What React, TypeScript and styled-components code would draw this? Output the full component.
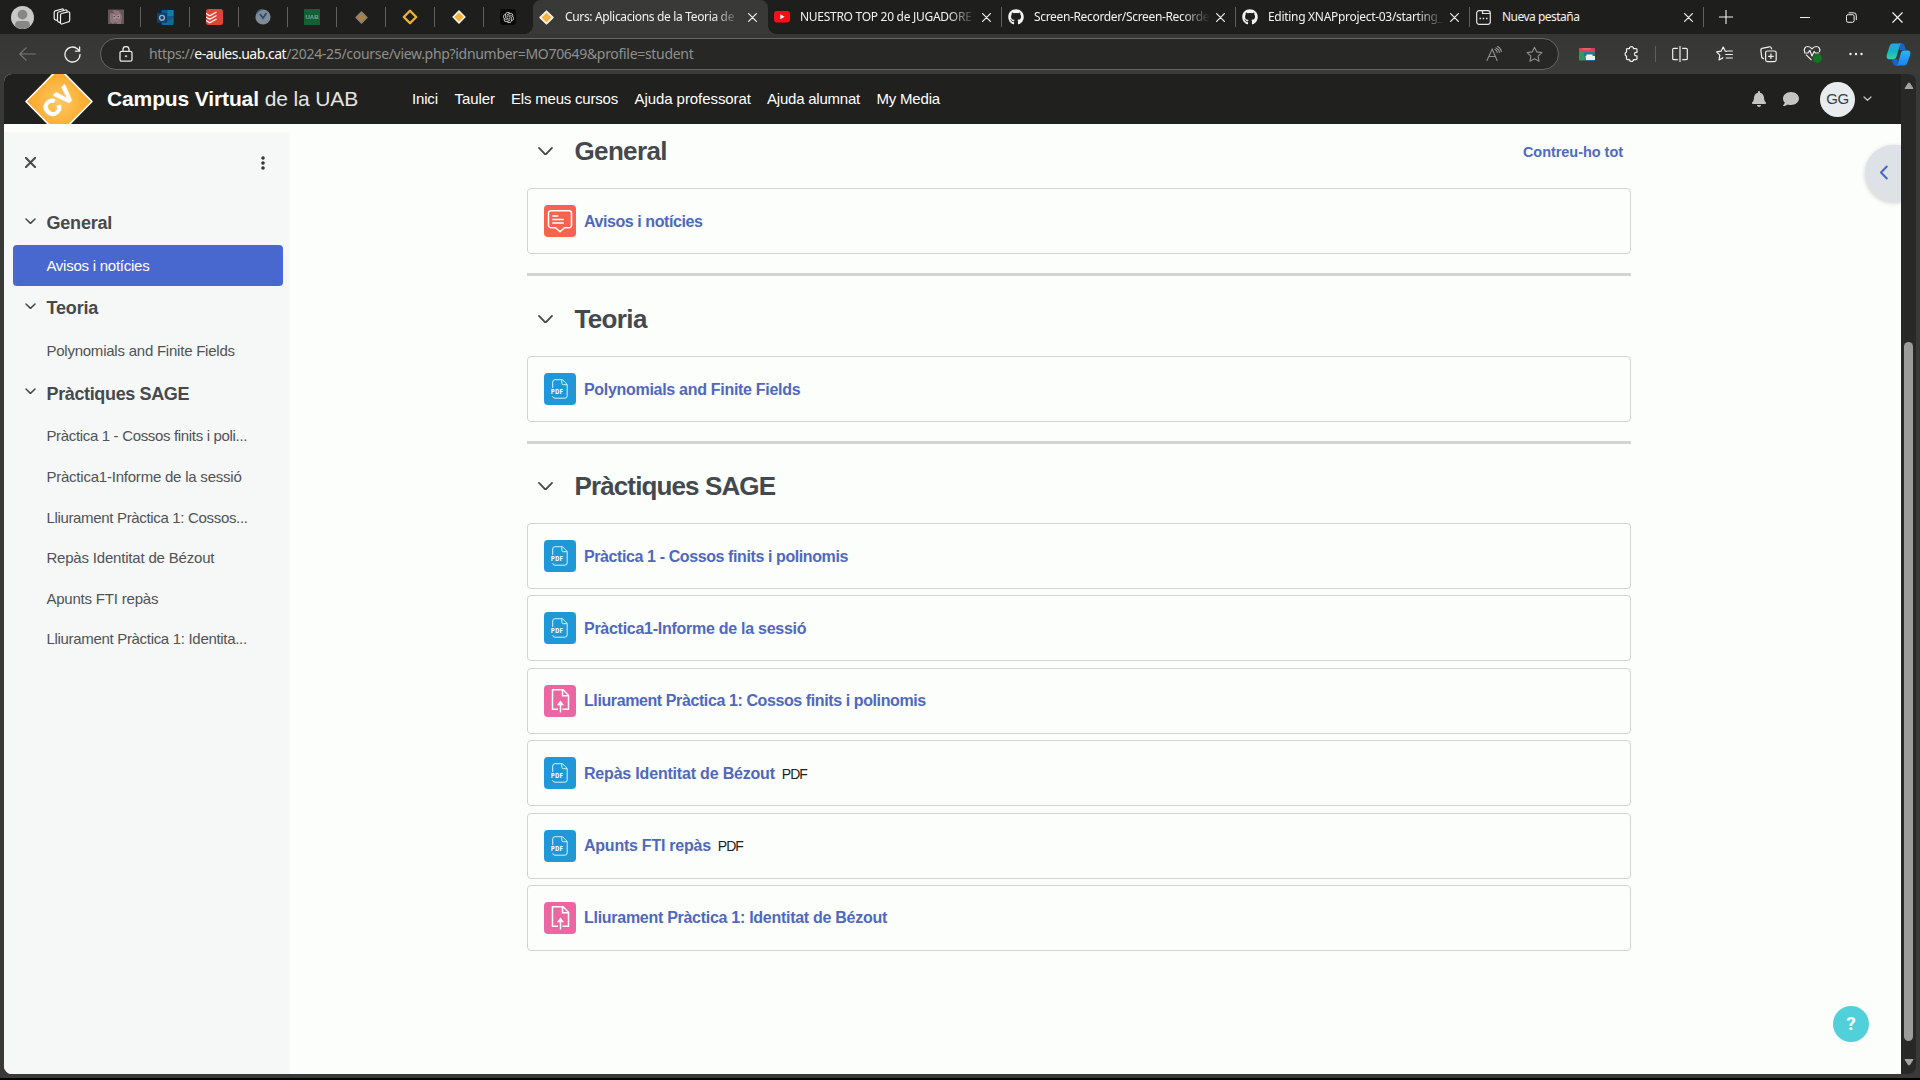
import React from 'react';
import styled, { createGlobalStyle, css } from 'styled-components';
import { FaBell, FaComment, FaGithub } from 'react-icons/fa';
import { RiOpenaiFill } from 'react-icons/ri';

const chromeFont = '"Noto Sans", "Open Sans", sans-serif';
const pageFont = '"Liberation Sans", Arial, sans-serif';

const GlobalStyle = createGlobalStyle`
  * { box-sizing: border-box; }
  html, body { margin: 0; background: #000; overflow: hidden; }
  svg { display: block; flex-shrink: 0; }
`;

const Window = styled.div`
  display: flex;
  flex-direction: column;
  width: 1920px;
  height: 1078px;
  background: #393a38;
  font-family: ${pageFont};
`;

/* ---------- tab strip ---------- */

const TabStrip = styled.div`
  display: flex;
  height: 34px;
  background: #1e1f1d;
  color: #f2f3f1;
  font: 12px ${chromeFont};
`;

const Slot = styled.div<{ $w: number }>`
  display: flex;
  flex: none;
  align-items: center;
  justify-content: center;
  width: ${p => p.$w}px;
  height: 100%;
`;

const PinnedTabs = styled.div`
  display: flex;
  margin-left: 12px;
`;

const PinnedTab = styled.div<{ $last?: boolean }>`
  display: flex;
  flex: none;
  align-items: center;
  justify-content: center;
  width: 49px;
  height: 34px;
  padding-right: 1px;
  background: ${p => (p.$last ? 'none' : 'linear-gradient(#60615f, #60615f) right center / 1px 20px no-repeat')};
`;

const Tab = styled.div<{ $active?: boolean; $divider?: boolean }>`
  position: relative;
  display: flex;
  flex: none;
  align-items: center;
  width: ${p => (p.$active ? 235 : 234)}px;
  height: 34px;
  padding: 0 8px 0 6px;
  ${p =>
    p.$divider &&
    css`
      background: linear-gradient(#60615f, #60615f) right center / 1px 20px no-repeat;
    `}
  ${p =>
    p.$active &&
    css`
      background: #393a38;
      border-radius: 8px 8px 0 0;
      &::before,
      &::after {
        content: '';
        position: absolute;
        bottom: 0;
        width: 8px;
        height: 8px;
      }
      &::before {
        left: -8px;
        background: radial-gradient(circle at 0 0, transparent 7.5px, #393a38 8px);
      }
      &::after {
        right: -8px;
        background: radial-gradient(circle at 100% 0, transparent 7.5px, #393a38 8px);
      }
    `}
`;

const TabTitle = styled.span<{ $track: number; $fade?: boolean; $gap?: number }>`
  flex: none;
  width: 176px;
  margin-left: ${p => p.$gap ?? 10}px;
  white-space: nowrap;
  line-height: 20px;
  letter-spacing: ${p => p.$track}px;
  ${p =>
    p.$fade &&
    css`
      mask-image: linear-gradient(90deg, #000 148px, transparent 176px);
    `}
`;

const TabClose = styled.span`
  display: flex;
  margin-left: auto;
  padding-right: 3px;
`;

const WindowButtons = styled.div`
  display: flex;
  margin-left: auto;
`;

/* ---------- toolbar ---------- */

const Toolbar = styled.div`
  display: flex;
  align-items: center;
  height: 40px;
  background: linear-gradient(#363735, #3b3c3a);
`;

const AddressBar = styled.div`
  display: flex;
  align-items: center;
  width: 1459px;
  height: 32px;
  margin-left: 10px;
  padding: 0 15px 0 18px;
  border: 1px solid #666765;
  border-radius: 16px;
  background: #272826;
  color: #8f908e;
  font: 14px ${chromeFont};
`;

const UrlPart = styled.span<{ $track: number; $host?: boolean }>`
  letter-spacing: ${p => p.$track}px;
  white-space: nowrap;
  color: ${p => (p.$host ? '#fbfcfa' : 'inherit')};
`;

const Url = styled.div`
  margin: 0 auto 1px 16px;
`;

const ToolActions = styled.div`
  display: flex;
  align-items: center;
  height: 40px;
  margin-left: 6px;
`;

const ToolDivider = styled.div`
  width: 1px;
  height: 16px;
  margin: 0 2px 0 2px;
  background: #5e5f5d;
`;

/* ---------- page ---------- */

const Viewport = styled.div`
  display: flex;
  height: 1000px;
  margin: 0 4px;
  border-radius: 8px;
  background: #282927;
  overflow: hidden;
`;

const Page = styled.div`
  position: relative;
  width: 1897px;
  background: #fcfefb;
`;

const NavBar = styled.header`
  display: flex;
  align-items: center;
  height: 50px;
  padding-left: 19px;
  background: #20211f;
  color: #fff;
`;

const Brand = styled.div`
  display: flex;
  align-items: baseline;
  width: 305px;
  margin-left: 13px;
  padding-bottom: 1px;
  font-size: 21px;
  line-height: 30px;
`;

const BrandWord = styled.span<{ $bold?: boolean; $track: number }>`
  font-weight: ${p => (p.$bold ? 700 : 400)};
  color: ${p => (p.$bold ? '#fff' : '#e4e5e3')};
  letter-spacing: ${p => p.$track}px;
  white-space: nowrap;
  & + & {
    margin-left: 6px;
  }
`;

const NavLinks = styled.nav`
  display: flex;
  padding-bottom: 2px;
`;

const NavLink = styled.a<{ $w: number; $track: number }>`
  flex: none;
  width: ${p => p.$w}px;
  font-size: 15px;
  letter-spacing: ${p => p.$track}px;
  white-space: nowrap;
`;

const UserTools = styled.div`
  display: flex;
  align-items: center;
  margin-left: auto;
  padding-right: 29px;
  color: #c4c5c3;
`;

const Initials = styled.div`
  display: flex;
  align-items: center;
  justify-content: center;
  width: 35px;
  height: 35px;
  margin: 0 8px 0 13px;
  padding-bottom: 2px;
  border-radius: 50%;
  background: #e9ecef;
  color: #383c3f;
  font-size: 15px;
  letter-spacing: -0.4px;
`;

const Body = styled.div`
  display: flex;
  height: 950px;
`;

/* ---------- course index ---------- */

const Drawer = styled.aside`
  width: 285px;
  margin-top: 9px;
  padding: 0 6px 0 9px;
  background: #f6f7f7;
  color: #474a4d;
  box-shadow: 0 0 3px #f6f7f7;
`;

const DrawerTop = styled.div`
  display: flex;
  align-items: center;
  justify-content: space-between;
  height: 61.4px;
  margin-bottom: 6px;
  padding: 0 18px 2px 12px;
`;

const IndexHeading = styled.div<{ $track: number }>`
  display: flex;
  align-items: center;
  gap: 10.5px;
  height: 44.6px;
  padding: 2px 0 0 12px;
  font-size: 18px;
  font-weight: 700;
  letter-spacing: ${p => p.$track}px;
  svg {
    margin-top: -6px;
  }
`;

const IndexItem = styled.div<{ $track: number; $selected?: boolean }>`
  height: 40.6px;
  padding-left: 33.4px;
  border-radius: 4px;
  font-size: 15px;
  line-height: 41.4px;
  letter-spacing: ${p => p.$track}px;
  white-space: nowrap;
  color: ${p => (p.$selected ? '#fff' : '#505356')};
  background: ${p => (p.$selected ? '#4868d0' : 'transparent')};
`;

/* ---------- course content ---------- */

const Content = styled.main`
  width: 1104px;
  margin-left: 238px;
`;

const Section = styled.section<{ $gap: number }>`
  padding: ${p => p.$gap}px 0 19px;
  & + & {
    border-top: 3px solid #d3d5d3;
  }
`;

const SectionHead = styled.div`
  display: flex;
  align-items: center;
  height: 54px;
  margin-bottom: 10px;
  padding: 0 8px 0 10.5px;
  color: #43494e;
`;

const SectionTitle = styled.h3<{ $track: number }>`
  margin: 0 auto 0 22px;
  font-size: 26px;
  font-weight: 700;
  letter-spacing: ${p => p.$track}px;
`;

const CollapseAll = styled.a`
  padding-top: 1px;
  color: #4f69c0;
  font-size: 14.5px;
  font-weight: 700;
  letter-spacing: -0.04px;
`;

const CardList = styled.div`
  display: flex;
  flex-direction: column;
  gap: 6.4px;
`;

const Card = styled.div`
  display: flex;
  align-items: center;
  height: 66px;
  padding-left: 16px;
  border: 1px solid #d1d4d2;
  border-radius: 4px;
`;

const CardLink = styled.a<{ $track: number }>`
  margin-left: 8px;
  padding-top: 1px;
  color: #4f68bf;
  font-size: 16px;
  font-weight: 700;
  letter-spacing: ${p => p.$track}px;
  white-space: nowrap;
`;

const FileType = styled.span`
  margin: 1px 0 0 7px;
  color: #1d2125;
  font-size: 14px;
  letter-spacing: -1px;
`;

/* ---------- floating controls ---------- */

const DrawerToggle = styled.button`
  position: absolute;
  top: 71px;
  right: 0;
  display: flex;
  align-items: center;
  width: 36px;
  height: 57px;
  padding: 0 0 3px 14px;
  border: 0;
  border-radius: 29px 0 0 29px;
  background: #dee2e6;
  box-shadow: 0 1px 4px rgba(0, 0, 0, 0.18);
`;

const HelpButton = styled.button`
  position: absolute;
  right: 32px;
  bottom: 32px;
  width: 36px;
  height: 36px;
  padding: 0;
  border: 0;
  border-radius: 50%;
  background: #52d0da;
  color: #fff;
  font: 700 19px/36px Roboto, ${pageFont};
`;

const Scrollbar = styled.div`
  display: flex;
  flex-direction: column;
  align-items: center;
  width: 15px;
  padding: 8px 0;
`;

const Thumb = styled.div`
  width: 9px;
  height: 699px;
  margin: auto 0 17px;
  border-radius: 5px;
  background: #9c9d9b;
`;

/* ---------- icons ---------- */

const Chevron = ({ w, stroke = 1.8, color = 'currentColor' }: { w: number; stroke?: number; color?: string }) => (
  <svg width={w} height={w * 0.58} viewBox={`0 0 ${w} ${w * 0.58}`} fill="none" stroke={color} strokeWidth={stroke} strokeLinecap="round" strokeLinejoin="round">
    <path d={`M1 1L${w / 2} ${w * 0.58 - 1}L${w - 1} 1`} />
  </svg>
);

const Cross = ({ s, stroke = 1.2 }: { s: number; stroke?: number }) => (
  <svg width={s} height={s} viewBox="0 0 10 10" stroke="currentColor" strokeWidth={(stroke * 10) / s} strokeLinecap="round">
    <path d="M.7 .7L9.3 9.3M9.3 .7L.7 9.3" />
  </svg>
);

const Avatar = () => (
  <svg width="23" height="23" viewBox="0 0 23 23">
    <circle cx="11.5" cy="11.5" r="11.5" fill="#c9cac8" />
    <circle cx="11.5" cy="8.6" r="4.9" fill="#878886" />
    <path d="M4.2 20.4c-.7-4.2 1.5-5.4 3.3-5.4h8c1.8 0 4 1.2 3.3 5.4A11.5 11.5 0 0 1 4.2 20.4z" fill="#878886" />
  </svg>
);

const Workspaces = () => (
  <svg width="18" height="18" viewBox="0 0 18 18" fill="none" stroke="#f0f1ef" strokeWidth="1.2" strokeLinejoin="round">
    <path d="M7.5 6.9a1.500 1.500 0 0 1 1.100-1.400l6.400-1.700a1.300 1.300 0 0 1 1.700 1.300v7.200a1.500 1.500 0 0 1-1.200 1.500l-6.400 2.200a1.200 1.200 0 0 1-1.600-1.100z" />
    <path d="M7.4 14.600l-1.600-.5a1.700 1.700 0 0 1-1.300-1.600V5.400a1.500 1.500 0 0 1 1.100-1.400l7-2a1.300 1.300 0 0 1 1.600 1.200v.6" />
    <path d="M4.400 12.500l-2-.6a1.600 1.600 0 0 1-1.200-1.600V4.200a1.500 1.500 0 0 1 1.100-1.400L9 1a1.200 1.200 0 0 1 1.500.9v.5" />
  </svg>
);

const AnimeFavicon = () => (
  <svg width="16" height="16" viewBox="0 0 16 16">
    <rect y=".5" width="16" height="14.5" fill="#65575b" />
    <path d="M2 13V5l4-4 5 1 3 5-1 8H9l-1-2-3 2z" fill="#8a747a" />
    <path d="M5 5l3 2 4-2v4L8 12 5 9z" fill="#a68f92" />
    <path d="M5.5 7.5h1.500M9.500 7.500H11M3 3l3 1M7.500 10h2" stroke="#54454b" />
  </svg>
);

const OutlookFavicon = () => (
  <svg width="17" height="17" viewBox="0 0 17 17">
    <rect x="4.5" y="1" width="12" height="13" rx="1" fill="#145a87" />
    <path d="M10.5 1h6v6h-6z" fill="#177b9b" />
    <path d="M4.5 9l6 3.500 6-3.500v6a1 1 0 0 1-1 1h-10a1 1 0 0 1-1-1z" fill="#146b91" />
    <rect x="0" y="3.8" width="10" height="10" rx="1" fill="#0b4274" />
    <circle cx="5" cy="8.8" r="2.4" fill="none" stroke="#9fb0bf" strokeWidth="1.4" />
  </svg>
);

const TodoistFavicon = () => (
  <svg width="17" height="16" viewBox="0 0 17 16">
    <rect width="17" height="16" rx="2.5" fill="#e14437" />
    <path d="M0 4.500l3.800 2.200L10.500 3M0 8l3.800 2.200 6.700-3.700M0 11.500l3.800 2.200 6.700-3.700" fill="none" stroke="#fff" strokeWidth="1.3" />
  </svg>
);

const ClockFavicon = () => (
  <svg width="16" height="16" viewBox="0 0 16 16">
    <circle cx="8" cy="8" r="7.6" fill="#7f8b97" />
    <path d="M1.500 5a7 7 0 0 1 6-4.500" stroke="#3a5e83" strokeWidth="1.3" fill="none" />
    <path d="M5 5l3 4 3.500-5" stroke="#28496e" strokeWidth="1.7" fill="none" />
  </svg>
);

const UabFavicon = styled.span`
  width: 16px;
  height: 16px;
  background: #155f35;
  color: #7da58c;
  font: 700 6px/16px ${pageFont};
  text-align: center;
`;

const DiamondFavicon = ({ fill, edge, s = 14 }: { fill: string; edge: string; s?: number }) => (
  <svg width={s} height={s} viewBox="0 0 14 14">
    <path d="M7 1.2L12.8 7 7 12.8 1.2 7z" fill={fill} stroke={edge} strokeWidth="1.7" strokeLinejoin="round" />
  </svg>
);

const RingFavicon = () => (
  <svg width="16" height="16" viewBox="0 0 16 16">
    <path d="M8 1.800L14.200 8 8 14.200 1.800 8z" fill="none" stroke="#f3b333" strokeWidth="2.3" strokeLinejoin="round" />
  </svg>
);

const ChatFavicon = styled.span`
  display: flex;
  align-items: center;
  justify-content: center;
  width: 16px;
  height: 16px;
  border-radius: 3px;
  background: #0a0b09;
  color: #dcdddb;
  font-size: 13px;
`;

const YoutubeFavicon = () => (
  <svg width="16" height="12" viewBox="0 0 16 12">
    <rect width="16" height="11.5" rx="3" fill="#fb0d18" />
    <path d="M6.300 3.300v5l4.300-2.500z" fill="#fff" />
  </svg>
);

const NewTabFavicon = () => (
  <svg width="15" height="15" viewBox="0 0 15 15" fill="none" stroke="#e6e7e5" strokeWidth="1.2">
    <rect x=".7" y=".7" width="13.6" height="13.6" rx="2.5" />
    <path d="M6.500 .8v2.700h7.600" />
    <path d="M3.500 8.500h1.500M6.700 8.500h1.500M10 8.500h1.500" strokeWidth="1.5" />
  </svg>
);

const Plus = () => (
  <svg width="14" height="14" viewBox="0 0 14 14" stroke="#f2f3f1" strokeWidth="1.1"><path d="M7 0v14M0 7h14" /></svg>
);
const Minimize = () => (
  <svg width="10" height="10" viewBox="0 0 10 10" stroke="#f2f3f1"><path d="M0 5.500h10" /></svg>
);
const Restore = () => (
  <svg width="11" height="11" viewBox="0 0 11 11" fill="none" stroke="#f2f3f1">
    <rect x=".5" y="2.7" width="7.6" height="7.6" rx="1.6" />
    <path d="M2.600 .8h4.900a2.700 2.700 0 0 1 2.800 2.800v4.500" />
  </svg>
);

const Back = () => (
  <svg width="17" height="14" viewBox="0 0 17 14" fill="none" stroke="#787977" strokeWidth="1.2" strokeLinecap="round"><path d="M16.300 7H.8M7 .8L.8 7 7 13.200" /></svg>
);
const Reload = () => (
  <svg width="17" height="17" viewBox="0 0 17 17" fill="none" stroke="#eff0ee" strokeWidth="1.3" strokeLinecap="round"><path d="M16 8.500A7.500 7.500 0 1 1 13.600 3l1.900 1.900M15.600 .9v4.200h-4.200" /></svg>
);
const Lock = () => (
  <svg width="14" height="16" viewBox="0 0 14 16" fill="none" stroke="#e6e7e5" strokeWidth="1.3"><rect x="1" y="5.3" width="12" height="9.9" rx="1.6" /><path d="M4 5.300V3.600a3 3 0 0 1 6 0v1.700" /><circle cx="7" cy="10.2" r=".8" fill="#e6e7e5" strokeWidth=".6" /></svg>
);
const ReadAloud = () => (
  <svg width="16" height="16" viewBox="0 0 16 16" fill="none" stroke="#8f908e" strokeWidth="1.1" strokeLinecap="round"><path d="M1 14.500L6.200 3l4.900 11.500M2.800 10.500h6.700M9 3.600q2 .9 2.300 3M9.900 1.900q3 1.100 3.600 4.500M11.400 .6q3.200 1.300 4 5" /></svg>
);
const starPath = 'M8.5 1.2l2.25 4.7 5.15.7-3.75 3.6.9 5.1-4.55-2.45-4.55 2.45.9-5.1L1.1 6.6l5.15-.7z';
const Star = () => (
  <svg width="17" height="17" viewBox="0 0 17 17" fill="none" stroke="#8f908e" strokeWidth="1.1" strokeLinejoin="round"><path d={starPath} /></svg>
);
const Gallery = () => (
  <svg width="16" height="13" viewBox="0 0 16 13"><rect width="16" height="12.5" rx="1" fill="#35965a" /><path d="M0 1a1 1 0 0 1 1-1h14a1 1 0 0 1 1 1v3H0z" fill="#df3f55" /><path d="M3.500 0h8v2h-8z" fill="#e95b70" /><path d="M5 4.500h11v7a1 1 0 0 1-1 1H6z" fill="#2c69b8" /><path d="M6.500 8h9.500v4H7z" fill="#f1f0df" /><path d="M7.500 6.500h6V8h-6z" fill="#fff" /></svg>
);
const Puzzle = () => (
  <svg width="16" height="16" viewBox="0 0 16 16" fill="none" stroke="#eff0ee" strokeWidth="1.2" strokeLinejoin="round"><path d="M4.700 2.600h1.700a2 2 0 0 1 4 0H13a1 1 0 0 1 1 1v2.700h-.8a1.800 1.800 0 0 0 0 3.600h.8v2.700a1 1 0 0 1-1 1h-2.500a2 2 0 0 1-4 0H4.500a1 1 0 0 1-1-1v-2.500a2.100 2.100 0 0 1 0-4V3.600a1 1 0 0 1 1.200-1z" /></svg>
);
const Split = () => (
  <svg width="16" height="16" viewBox="0 0 16 16" fill="none" stroke="#eff0ee" strokeWidth="1.2"><path d="M8 0v16M5.800 2.300H2a1.300 1.300 0 0 0-1.300 1.300v8.800A1.300 1.300 0 0 0 2 13.700h3.800M10.200 2.300H14a1.300 1.300 0 0 1 1.300 1.300v8.800a1.300 1.300 0 0 1-1.300 1.300h-3.800" /></svg>
);
const Favorites = () => (
  <svg width="17" height="16" viewBox="0 0 17 16" fill="none" stroke="#eff0ee" strokeWidth="1.2" strokeLinecap="round" strokeLinejoin="round"><path d="M10.500 5.300l-1.300-.2L7.200 1 5.100 5.200l-4.500.7 3.200 3.200-.8 4.900 3.800-2.100M11.500 5h4.900M9.800 8.500h6.600M10.200 12h6.200" /></svg>
);
const Collections = () => (
  <svg width="17" height="17" viewBox="0 0 17 17" fill="none" stroke="#eff0ee" strokeWidth="1.2" strokeLinejoin="round"><rect x="5.6" y="5" width="10.6" height="10.6" rx="1.8" /><path d="M10.900 7.500v5.600M8.100 10.300h5.600M4 12.600l-1.100-.3a1.500 1.500 0 0 1-1.100-1L.8 4.200A1.800 1.800 0 0 1 2.100 2.300L9.300.8a1.800 1.800 0 0 1 2.100 1.300l.2 1.200" /></svg>
);
const Health = () => (
  <svg width="20" height="18" viewBox="0 0 20 18" fill="none"><path d="M1.800 7.200C.3 3.900 2.200 1.500 4.800 1.500c2 0 3.200 1 4.200 2.300 1-1.300 2.200-2.300 4.200-2.300 2.700 0 4.500 2.600 3.200 5.500M3 9.700l5.500 5.500M1 8h4l1.800-2.700L9 11l2.200-4.500L12.300 8h4" stroke="#eff0ee" strokeWidth="1.2" strokeLinejoin="round" /><circle cx="14.3" cy="13.2" r="4.5" fill="#147422" /></svg>
);
const Dots = () => (
  <svg width="14" height="4" viewBox="0 0 14 4" fill="#eff0ee"><circle cx="1.5" cy="2" r="1.2" /><circle cx="7" cy="2" r="1.2" /><circle cx="12.5" cy="2" r="1.2" /></svg>
);
const Copilot = () => (
  <svg width="25" height="23" viewBox="0 0 25 23">
    <defs>
      <linearGradient id="cpA" x1="0" y1="0" x2="0" y2="1"><stop offset="0" stopColor="#25a6e6" /><stop offset=".5" stopColor="#16b3c4" /><stop offset="1" stopColor="#35d39a" /></linearGradient>
      <linearGradient id="cpB" x1="0" y1="0" x2="0" y2="1"><stop offset="0" stopColor="#2bb5f5" /><stop offset="1" stopColor="#1b82f0" /></linearGradient>
    </defs>
    <path d="M13 .5h3a2.500 2.500 0 0 1 2.400 1.800l1.600 5h-6z" fill="#1866c4" />
    <path d="M12 22.500H9.500a2.500 2.500 0 0 1-2.400-1.800L5.500 16h6z" fill="#1762cf" />
    <path d="M6.800.5h9.400c-1.500 0-2.200 1.300-2.700 3l-3 10.200c-.5 1.600-1.400 2.500-3.200 2.500H3.500C1 16.200.1 14 .9 11.400L3.500 3.500C4.200 1.500 5 .5 6.800.5z" fill="url(#cpA)" />
    <path d="M18.200 22.500H9.500c1.500 0 2.200-1.300 2.700-3l2.700-9.400c.5-1.700 1.400-2.700 3.200-2.700h3.400c2.500 0 3.500 2 2.700 4.700l-2.700 7.400c-.7 2-1.500 3-3.300 3z" fill="url(#cpB)" />
  </svg>
);

const CvLogo = () => (
  <svg width="71" height="50" viewBox="0 0 71 50">
    <defs>
      <radialGradient id="cv" cx=".5" cy=".5" r=".5"><stop offset="0" stopColor="#ffc866" /><stop offset=".65" stopColor="#fbb23a" /><stop offset="1" stopColor="#f9a62c" /></radialGradient>
    </defs>
    <path d="M36-6L69 27.500 36 61 3 27.500z" fill="url(#cv)" stroke="#fff" strokeWidth="1.6" strokeLinejoin="round" />
    <text x="35.5" y="35.5" textAnchor="middle" transform="rotate(-44 35.5 27)" fontFamily={pageFont} fontWeight="700" fontSize="23" letterSpacing="1.5" fill="#fff" stroke="#fff" strokeWidth="1.1" strokeLinejoin="round">CV</text>
  </svg>
);

const IconTile = ({ color, children }: { color: string; children: React.ReactNode }) => (
  <svg width="32" height="32" viewBox="0 0 32 32"><rect width="32" height="32" rx="4" fill={color} />{children}</svg>
);
const ForumIcon = () => (
  <IconTile color="#f7634d"><g fill="none" stroke="#fff" strokeWidth="1.5" strokeLinejoin="round"><path d="M7 5.700h18a2.500 2.500 0 0 1 2.500 2.500v12a2.500 2.500 0 0 1-2.500 2.500h-4.500L16 26.800l-4.500-4.100H7a2.500 2.500 0 0 1-2.500-2.500v-12A2.500 2.500 0 0 1 7 5.700z" /><path d="M8.300 11h6M8.300 14.500h11.500M8.300 18h11.500" strokeWidth="1.7" /></g></IconTile>
);
const PdfIcon = () => (
  <IconTile color="#1f98d8"><g fill="none" stroke="#d9f0fb" strokeWidth="1"><path d="M8.700 15V9a2.300 2.300 0 0 1 2.300-2.300h7.500l4.700 4.800v11.400a2.300 2.300 0 0 1-2.300 2.300H11a2.300 2.300 0 0 1-2.300-2" /><path d="M17.800 6.700v3.500a1.500 1.500 0 0 0 1.500 1.500h3.700" /></g><text x="7" y="21" fontFamily="Inter, sans-serif" fontWeight="800" fontSize="5.5" textLength="12" fill="#fff">PDF</text></IconTile>
);
const UploadIcon = () => (
  <IconTile color="#eb66a2"><g fill="none" stroke="#fff" strokeWidth="1.5"><path d="M14 24.200H8.500V4.700H19l5.500 5.500v14H18.500" /><path d="M18.500 4.700v6h6" /><path d="M16.500 27.500V18" /></g><path d="M16.500 15.500l3.600 4.700h-7.200z" fill="#fff" /></IconTile>
);
const Kebab = () => (
  <svg width="4" height="14" viewBox="0 0 4 14" fill="#33373a"><circle cx="2" cy="2" r="1.8" /><circle cx="2" cy="7" r="1.8" /><circle cx="2" cy="12" r="1.8" /></svg>
);
const ChevronLeft = () => (
  <svg width="10" height="15" viewBox="0 0 10 15" fill="none" stroke="#4a66c4" strokeWidth="2" strokeLinecap="round" strokeLinejoin="round"><path d="M7.800 1.500L2 7.500l5.800 6" /></svg>
);
const ScrollArrow = ({ down }: { down?: boolean }) => (
  <svg width="10" height="8" viewBox="0 0 10 8" fill="#a4a5a3" stroke="#a4a5a3" strokeLinejoin="round"><path d={down ? 'M1 1.500h8L5.500 7h-1z' : 'M1 6.500h8L5.500 1h-1z'} /></svg>
);

/* ---------- data ---------- */

type IndexEntry = [title: string, track: number];
const courseIndex: { title: string; track: number; items: IndexEntry[] }[] = [
  { title: 'General', track: -0.2, items: [['Avisos i notícies', -0.25]] },
  { title: 'Teoria', track: -0.16, items: [['Polynomials and Finite Fields', -0.23]] },
  {
    title: 'Pràctiques SAGE',
    track: -0.36,
    items: [
      ['Pràctica 1 - Cossos finits i poli...', -0.33],
      ['Pràctica1-Informe de la sessió', -0.22],
      ['Lliurament Pràctica 1: Cossos...', -0.33],
      ['Repàs Identitat de Bézout', -0.19],
      ['Apunts FTI repàs', -0.2],
      ['Lliurament Pràctica 1: Identita...', -0.31],
    ],
  },
];

type Kind = 'forum' | 'pdf' | 'upload';
const kindIcons: Record<Kind, React.ReactNode> = { forum: <ForumIcon />, pdf: <PdfIcon />, upload: <UploadIcon /> };

const sections: { title: string; track: number; gap: number; cards: { kind: Kind; title: string; track: number; type?: string }[] }[] = [
  { title: 'General', track: -0.65, gap: 0, cards: [{ kind: 'forum', title: 'Avisos i notícies', track: -0.43 }] },
  { title: 'Teoria', track: -0.65, gap: 16, cards: [{ kind: 'pdf', title: 'Polynomials and Finite Fields', track: -0.3 }] },
  {
    title: 'Pràctiques SAGE',
    track: -0.88,
    gap: 15,
    cards: [
      { kind: 'pdf', title: 'Pràctica 1 - Cossos finits i polinomis', track: -0.4 },
      { kind: 'pdf', title: 'Pràctica1-Informe de la sessió', track: -0.27 },
      { kind: 'upload', title: 'Lliurament Pràctica 1: Cossos finits i polinomis', track: -0.4 },
      { kind: 'pdf', title: 'Repàs Identitat de Bézout', track: -0.19, type: 'PDF' },
      { kind: 'pdf', title: 'Apunts FTI repàs', track: -0.24, type: 'PDF' },
      { kind: 'upload', title: 'Lliurament Pràctica 1: Identitat de Bézout', track: -0.28 },
    ],
  },
];

const navLinks: [string, number, number][] = [
  ['Inici', 42.5, -0.17],
  ['Tauler', 56.5, -0.07],
  ['Els meus cursos', 123.5, -0.2],
  ['Ajuda professorat', 132.5, -0.07],
  ['Ajuda alumnat', 109.5, -0.22],
  ['My Media', 70, -0.2],
];

const pinned = [
  <AnimeFavicon />,
  <OutlookFavicon />,
  <TodoistFavicon />,
  <ClockFavicon />,
  <UabFavicon>UAB</UabFavicon>,
  <DiamondFavicon fill="#a8834a" edge="#8c8072" s={13} />,
  <RingFavicon />,
  <DiamondFavicon fill="#f3b33c" edge="#f4f1e8" />,
  <ChatFavicon><RiOpenaiFill /></ChatFavicon>,
];

/* ---------- views ---------- */

const Tabs = () => (
  <TabStrip>
    <Slot $w={44}><Avatar /></Slot>
    <Slot $w={36}><Workspaces /></Slot>
    <PinnedTabs>
      {pinned.map((icon, i) => (
        <PinnedTab key={i} $last={i === pinned.length - 1}>{icon}</PinnedTab>
      ))}
    </PinnedTabs>
    <Tab $active>
      <DiamondFavicon fill="#f3b33c" edge="#f4f1e8" s={15} />
      <TabTitle $track={-0.34} $fade $gap={11}>Curs: Aplicacions de la Teoria de</TabTitle>
      <TabClose><Cross s={9} /></TabClose>
    </Tab>
    <Tab $divider>
      <YoutubeFavicon />
      <TabTitle $track={-0.28} $fade>NUESTRO TOP 20 de JUGADORE</TabTitle>
      <TabClose><Cross s={9} /></TabClose>
    </Tab>
    <Tab $divider>
      <FaGithub size={16} />
      <TabTitle $track={-0.34} $fade>Screen-Recorder/Screen-Recorde</TabTitle>
      <TabClose><Cross s={9} /></TabClose>
    </Tab>
    <Tab $divider>
      <FaGithub size={16} />
      <TabTitle $track={-0.3} $fade>Editing XNAPproject-03/starting_</TabTitle>
      <TabClose><Cross s={9} /></TabClose>
    </Tab>
    <Tab $divider>
      <NewTabFavicon />
      <TabTitle $track={-0.52} $gap={11}>Nueva pestaña</TabTitle>
      <TabClose><Cross s={9} /></TabClose>
    </Tab>
    <Slot $w={43}><Plus /></Slot>
    <WindowButtons>
      <Slot $w={46}><Minimize /></Slot>
      <Slot $w={46}><Restore /></Slot>
      <Slot $w={46}><Cross s={11} /></Slot>
    </WindowButtons>
  </TabStrip>
);

const AddressRow = () => (
  <Toolbar>
    <Slot $w={55}><Back /></Slot>
    <Slot $w={35}><Reload /></Slot>
    <AddressBar>
      <Lock />
      <Url>
        <UrlPart $track={-0.37}>https://</UrlPart>
        <UrlPart $track={-0.5} $host>e-aules.uab.cat</UrlPart>
        <UrlPart $track={-0.31}>/2024-25/course/view.php?idnumber=MO70649&amp;profile=student</UrlPart>
      </Url>
      <ReadAloud />
      <Slot $w={24} />
      <Star />
    </AddressBar>
    <ToolActions>
      <Slot $w={44}><Gallery /></Slot>
      <Slot $w={44}><Puzzle /></Slot>
      <ToolDivider />
      <Slot $w={44}><Split /></Slot>
      <Slot $w={44}><Favorites /></Slot>
      <Slot $w={44}><Collections /></Slot>
      <Slot $w={45}><Health /></Slot>
      <Slot $w={42}><Dots /></Slot>
      <Slot $w={42}><Copilot /></Slot>
    </ToolActions>
  </Toolbar>
);

export default function App() {
  return (
    <>
      <GlobalStyle />
      <Window>
        <Tabs />
        <AddressRow />
        <Viewport>
          <Page>
            <NavBar>
              <CvLogo />
              <Brand>
                <BrandWord $bold $track={-0.13}>Campus Virtual</BrandWord>
                <BrandWord $track={-0.15}>de la UAB</BrandWord>
              </Brand>
              <NavLinks>
                {navLinks.map(([label, w, track]) => (
                  <NavLink key={label} $w={w} $track={track}>{label}</NavLink>
                ))}
              </NavLinks>
              <UserTools>
                <Slot $w={32}><FaBell size={16} /></Slot>
                <Slot $w={32}><FaComment size={16} /></Slot>
                <Initials>GG</Initials>
                <Chevron w={9} stroke={1.3} />
              </UserTools>
            </NavBar>
            <Body>
              <Drawer>
                <DrawerTop><Cross s={11} stroke={2} /><Kebab /></DrawerTop>
                {courseIndex.map(group => (
                  <React.Fragment key={group.title}>
                    <IndexHeading $track={group.track}><Chevron w={11} stroke={1.5} />{group.title}</IndexHeading>
                    {group.items.map(([title, track]) => (
                      <IndexItem key={title} $track={track} $selected={group.title === 'General'}>{title}</IndexItem>
                    ))}
                  </React.Fragment>
                ))}
              </Drawer>
              <Content>
                {sections.map((s, i) => (
                  <Section key={s.title} $gap={s.gap}>
                    <SectionHead>
                      <Chevron w={15} />
                      <SectionTitle $track={s.track}>{s.title}</SectionTitle>
                      {i === 0 && <CollapseAll>Contreu-ho tot</CollapseAll>}
                    </SectionHead>
                    <CardList>
                      {s.cards.map(c => (
                        <Card key={c.title}>
                          {kindIcons[c.kind]}
                          <CardLink $track={c.track}>{c.title}</CardLink>
                          {c.type && <FileType>{c.type}</FileType>}
                        </Card>
                      ))}
                    </CardList>
                  </Section>
                ))}
              </Content>
            </Body>
            <DrawerToggle><ChevronLeft /></DrawerToggle>
            <HelpButton>?</HelpButton>
          </Page>
          <Scrollbar>
            <ScrollArrow />
            <Thumb />
            <ScrollArrow down />
          </Scrollbar>
        </Viewport>
      </Window>
    </>
  );
}
